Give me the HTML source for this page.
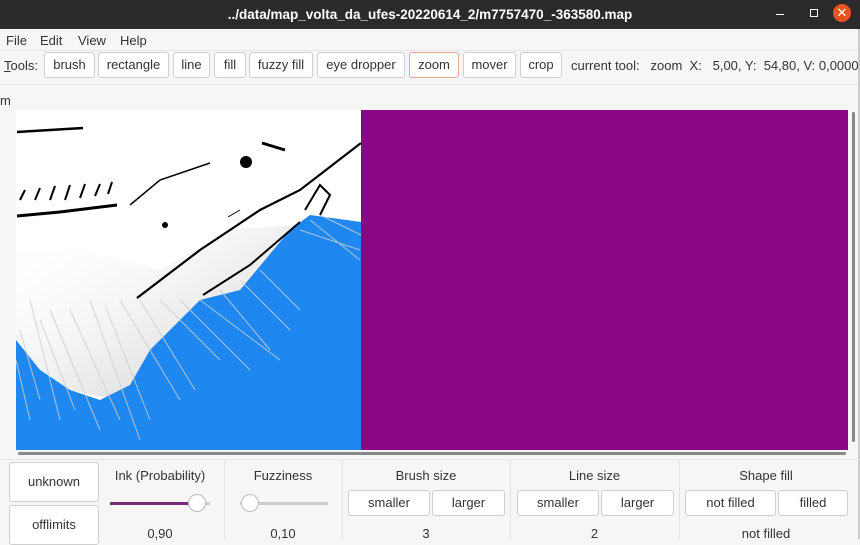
<!DOCTYPE html>
<html><head><meta charset="utf-8"><style>
*{margin:0;padding:0;box-sizing:border-box}
body{width:860px;height:539px;overflow:hidden;background:#f6f6f6;font-family:"Liberation Sans",sans-serif;font-size:13px;color:#333;position:relative}
.a{position:absolute}
.title{left:0;top:0;width:860px;height:29px;background:#2b2b2b;color:#fff;font-weight:bold;font-size:13.5px;text-align:center;line-height:29px}
.btn{position:absolute;height:26px;border:1px solid #cfcfcf;border-radius:3px;background:#fff;text-align:center;line-height:24px;font-size:13px;color:#333}
.lbl{position:absolute;font-size:13px;color:#333;text-align:center}
.sep{position:absolute;top:460px;width:1px;height:79px;background:#e2e2e2}
</style></head><body>
<div class="a title">../data/map_volta_da_ufes-20220614_2/m7757470_-363580.map</div>
<div class="a" style="left:776px;top:14px;width:8px;height:1px;background:#fff"></div>
<div class="a" style="left:810px;top:9px;width:8px;height:8px;border:1px solid #fff"></div>
<div class="a" style="left:833px;top:4px;width:18px;height:18px;border-radius:50%;background:#e95420;color:#fff;font-size:13px;line-height:18px;text-align:center">✕</div>
<div class="a" style="left:0;top:29px;width:860px;height:22px;background:#f6f6f6;border-bottom:1px solid #e6e6e6"></div>
<div class="lbl" style="left:6px;top:33px">File</div>
<div class="lbl" style="left:40px;top:33px">Edit</div>
<div class="lbl" style="left:78px;top:33px">View</div>
<div class="lbl" style="left:120px;top:33px">Help</div>
<div class="lbl" style="left:4px;top:58px"><u>T</u>ools:</div>
<div class="btn" style="left:44px;top:52px;width:51px">brush</div>
<div class="btn" style="left:98px;top:52px;width:71px">rectangle</div>
<div class="btn" style="left:173px;top:52px;width:37px">line</div>
<div class="btn" style="left:214px;top:52px;width:32px">fill</div>
<div class="btn" style="left:249px;top:52px;width:64px">fuzzy fill</div>
<div class="btn" style="left:317px;top:52px;width:88px">eye dropper</div>
<div class="btn" style="left:409px;top:52px;width:50px;border-color:#e8a89a">zoom</div>
<div class="btn" style="left:463px;top:52px;width:53px">mover</div>
<div class="btn" style="left:520px;top:52px;width:42px">crop</div>
<div class="lbl" style="left:571px;top:58px;white-space:nowrap">current tool:&nbsp;&nbsp; zoom&nbsp; X:&nbsp;&nbsp; 5,00, Y:&nbsp; 54,80, V: 0,000000</div>
<div class="a" style="left:0;top:84px;width:860px;height:1px;background:#e6e6e6"></div>
<div class="lbl" style="left:0;top:93px">m</div>
<svg class="a" style="left:16px;top:110px" width="832" height="340" viewBox="16 110 832 340">
<rect x="16" y="110" width="345" height="340" fill="#fff"/>
<rect x="361" y="110" width="487" height="340" fill="#8b0683"/>
<defs><linearGradient id="g" x1="0" y1="0" x2="1" y2="1"><stop offset="0" stop-color="#fff" stop-opacity="0"/><stop offset="1" stop-color="#aaa" stop-opacity=".7"/></linearGradient></defs>
<polygon points="16,250 100,255 160,270 230,230 300,225 300,260 200,330 120,400 16,380" fill="url(#g)"/>
<polygon points="16,340 40,370 70,390 100,400 130,385 150,350 170,330 200,300 240,290 290,230 310,215 361,222 361,450 16,450" fill="#1e88f0"/>
<g stroke="#c8ced4" stroke-width="1" opacity=".85">
<line x1="30" y1="300" x2="60" y2="420"/><line x1="50" y1="310" x2="100" y2="430"/><line x1="90" y1="300" x2="140" y2="440"/><line x1="120" y1="300" x2="180" y2="400"/><line x1="160" y1="300" x2="220" y2="360"/><line x1="200" y1="300" x2="280" y2="360"/><line x1="220" y1="290" x2="270" y2="350"/><line x1="300" y1="230" x2="360" y2="250"/><line x1="310" y1="220" x2="360" y2="260"/><line x1="20" y1="330" x2="40" y2="400"/>
<line x1="40" y1="320" x2="75" y2="410"/><line x1="70" y1="310" x2="120" y2="420"/><line x1="105" y1="305" x2="150" y2="420"/><line x1="140" y1="300" x2="195" y2="390"/><line x1="180" y1="300" x2="250" y2="370"/><line x1="240" y1="280" x2="290" y2="330"/><line x1="260" y1="270" x2="300" y2="310"/><line x1="320" y1="215" x2="361" y2="235"/><line x1="16" y1="360" x2="30" y2="420"/>
</g>
<g stroke="#000" fill="none">
<path d="M137,298 L200,250 L260,210 L300,190 L361,143" stroke-width="2.2"/>
<path d="M203,295 L250,265 L300,222" stroke-width="2"/>
<path d="M17,132 L83,128" stroke-width="2.5"/>
<path d="M17,216 L60,212 L117,205" stroke-width="3"/>
<path d="M20,200 L25,190 M35,200 L40,188 M50,200 L55,186 M65,200 L70,185 M80,198 L85,184 M95,196 L100,184 M108,194 L112,182" stroke-width="2"/>
<path d="M130,205 L160,180 L210,163" stroke-width="1.5"/>
<path d="M305,210 L320,185 L330,195 L320,215" stroke-width="2"/>
<path d="M228,217 L240,210" stroke-width="1"/>
<path d="M262,143 L285,150" stroke-width="3"/>
</g>
<circle cx="246" cy="162" r="6" fill="#000"/>
<circle cx="165" cy="225" r="3" fill="#000"/>
</svg>
<div class="a" style="left:18px;top:452px;width:828px;height:3px;background:#888;border-radius:2px"></div>
<div class="a" style="left:852px;top:112px;width:3px;height:330px;background:#888;border-radius:2px"></div>
<div class="a" style="left:858px;top:29px;width:2px;height:510px;background:#ccc"></div>
<div class="a" style="left:0;top:459px;width:860px;height:1px;background:#e6e6e6"></div>
<div class="btn" style="left:9px;top:462px;width:90px;height:40px;line-height:38px">unknown</div>
<div class="btn" style="left:9px;top:505px;width:90px;height:40px;line-height:38px">offlimits</div>
<div class="sep" style="left:224px"></div><div class="sep" style="left:342px"></div><div class="sep" style="left:510px"></div><div class="sep" style="left:679px"></div>
<div class="lbl" style="left:100px;top:468px;width:120px">Ink (Probability)</div>
<div class="a" style="left:110px;top:502px;width:85px;height:3px;background:#7a2b78"></div>
<div class="a" style="left:195px;top:502px;width:15px;height:3px;background:#ccc"></div>
<div class="a" style="left:188px;top:494px;width:18px;height:18px;border-radius:50%;background:#fff;border:1px solid #bbb"></div>
<div class="lbl" style="left:100px;top:526px;width:120px">0,90</div>
<div class="lbl" style="left:224px;top:468px;width:118px">Fuzziness</div>
<div class="a" style="left:240px;top:502px;width:88px;height:3px;background:#ccc"></div>
<div class="a" style="left:241px;top:494px;width:18px;height:18px;border-radius:50%;background:#fff;border:1px solid #bbb"></div>
<div class="lbl" style="left:224px;top:526px;width:118px">0,10</div>
<div class="lbl" style="left:342px;top:468px;width:168px">Brush size</div>
<div class="btn" style="left:348px;top:490px;width:82px">smaller</div>
<div class="btn" style="left:432px;top:490px;width:73px">larger</div>
<div class="lbl" style="left:342px;top:526px;width:168px">3</div>
<div class="lbl" style="left:510px;top:468px;width:169px">Line size</div>
<div class="btn" style="left:517px;top:490px;width:82px">smaller</div>
<div class="btn" style="left:601px;top:490px;width:73px">larger</div>
<div class="lbl" style="left:510px;top:526px;width:169px">2</div>
<div class="lbl" style="left:680px;top:468px;width:172px">Shape fill</div>
<div class="btn" style="left:685px;top:490px;width:91px">not filled</div>
<div class="btn" style="left:778px;top:490px;width:70px">filled</div>
<div class="lbl" style="left:680px;top:526px;width:172px">not filled</div>
</body></html>
